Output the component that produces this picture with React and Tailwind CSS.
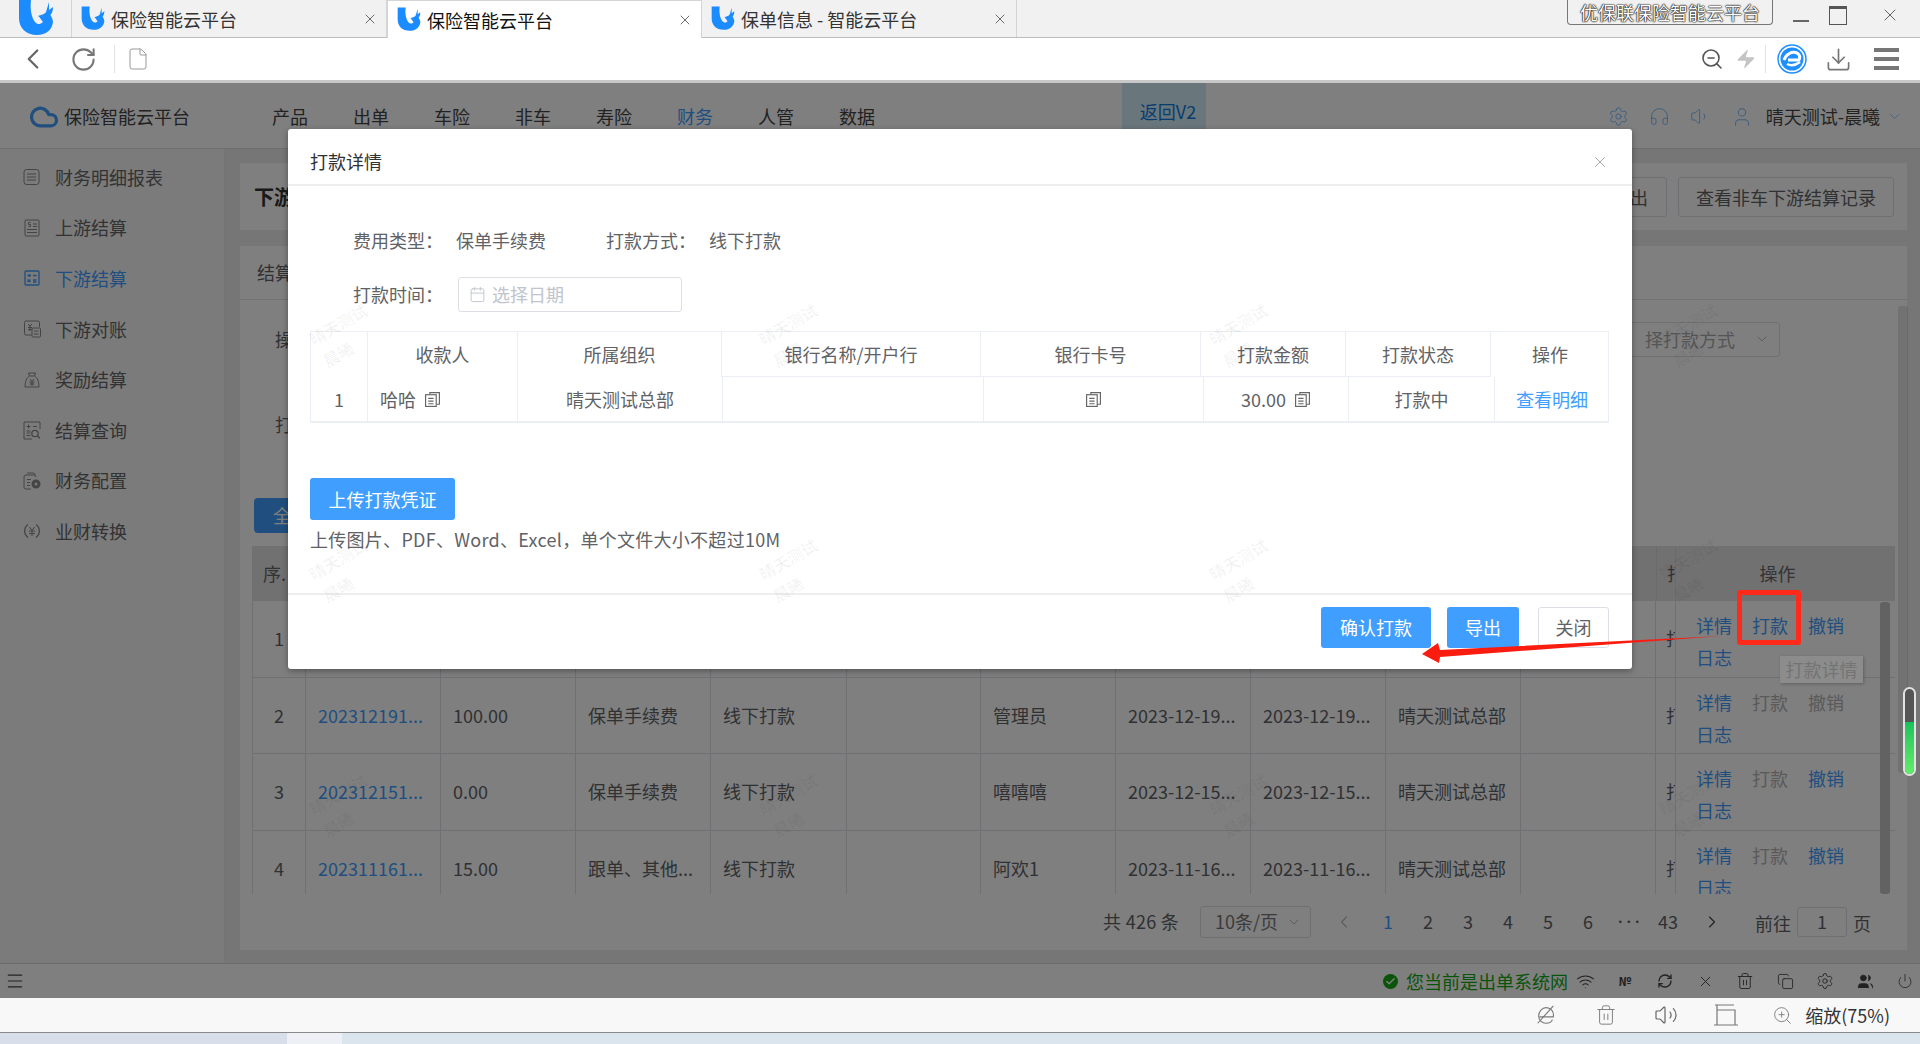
import { Calendar, ChevronDown, ChevronLeft, ChevronRight, Cloud, Download, File, Headphones, Menu, RefreshCw, RotateCw, Settings, Trash2, User, Volume1, Volume2, Wifi, X, Zap, ZoomOut, ZoomIn, Users, Power, Copy, Check } from 'lucide-react';

const tabs = [
  { title: '保险智能云平台' },
  { title: '保险智能云平台', active: true },
  { title: '保单信息 - 智能云平台' },
];

const navItems = ['产品', '出单', '车险', '非车', '寿险', '财务', '人管', '数据'];

const rows = [
  { no: 1, ops: [true, true, true], tall: true },
  { no: 2, id: '202312191...', amount: '100.00', type: '保单手续费', person: '管理员', date: '2023-12-19...', ops: [true, false, false] },
  { no: 3, id: '202312151...', amount: '0.00', type: '保单手续费', person: '嘻嘻嘻', date: '2023-12-15...', ops: [true, false, true] },
  { no: 4, id: '202311161...', amount: '15.00', type: '跟单、其他...', person: '阿欢1', date: '2023-11-16...', ops: [true, false, true] },
];

function BrandMark({ className }) {
  return (
    <svg viewBox="0 0 36 36" className={className}>
      <path fill="#1a8cff" d="M1 0H13C12 8 13 18 18 23 20 25 23 24 25 22 23 20 22 17 20 16 23 15 27 14 28 12L31 2 31 10 35 7C35 11 34 13 32.500 15 34 18 35 20 35 22 34 30 28 35 19 35 8 35 1 28 1 18Z" />
    </svg>
  );
}

function EdgeBadge() {
  return (
    <svg viewBox="0 0 30 30" className="w-[30px] h-[30px]">
      <circle cx="15" cy="15" r="14" fill="white" stroke="#1f8fff" strokeWidth="1.500" />
      <circle cx="15" cy="15" r="11.500" fill="#1f8fff" />
      <path d="M7 16C9 10 15 7 20 9 23 11 23 14 22 16H11" fill="none" stroke="white" strokeWidth="3" />
      <path d="M10 20C14 22 19 21 23 18" fill="none" stroke="white" strokeWidth="2.500" />
    </svg>
  );
}

function CopyIcon() {
  return (
    <svg viewBox="0 0 16 16" className="w-[17px] h-[17px] text-[#666]" fill="none" stroke="currentColor" strokeWidth="1.1">
      <path d="M5.5 3V1.5h9v11H12" />
      <rect x="1.5" y="3.5" width="10" height="11" />
      <path d="M4 7h5M4 9.5h5M4 12h5" />
    </svg>
  );
}

function SideIcon({ kind }) {
  const common = { viewBox: '0 0 20 20', className: 'w-[20px] h-[20px]', fill: 'none', stroke: 'currentColor', strokeWidth: 1 };
  if (kind === 0) return <svg {...common}><rect x="2" y="2.5" width="15" height="15" rx="2.5" /><path d="M5 7h9M5 10h9M5 13h9" /></svg>;
  if (kind === 1) return <svg {...common}><rect x="3" y="2" width="14" height="16" rx="1" /><path d="M11 6h4M11 8.5h4M5 11.5h10M5 14.5h10M8.5 4.5H6.5v2h2v2h-2" /></svg>;
  if (kind === 2) return <svg {...common} strokeWidth="1.3"><rect x="3" y="3" width="14" height="14" rx="1" /><path d="M5.5 7.5h3.5M7.2 6v3M11 7.5h3.5M5.5 14l3-2.5M8.5 14l-3-2.5M11 12h3.5M11 14h3.5" /></svg>;
  if (kind === 3) return <svg {...common}><path d="M10 16H4a1.5 1.5 0 0 1-1.500-1.500V3.500A1.500 1.500 0 0 1 4 2h12a1.500 1.500 0 0 1 1.500 1.500V8" /><rect x="10" y="9" width="8.500" height="9" rx="1" /><path d="M6 5l2 2 2-2M8 7v5M6 8.500h4M6 10.500h4M12 12h4.500M12 15h4.500" /></svg>;
  if (kind === 4) return <svg {...common}><path d="M7.500 6 6.500 3h7l-1 3c3 1.500 4.500 6 4.500 11H3c0-5 1.500-9.500 4.500-11zM7.500 6h5M8 9l2 2.500L12 9M7.500 12h5M7.500 14h5M10 11.500V16" /></svg>;
  if (kind === 5) return <svg {...common}><path d="M18 9V2H2v17h8" /><path d="M4.500 6.500h4M6.500 4.500v4M11 6.500h4M4.500 11h4M4.500 13h4M4.500 15.500h4" /><circle cx="13" cy="13.500" r="3.200" strokeWidth="1.300" /><path d="m15.500 16 2.500 2.500" strokeWidth="1.300" /></svg>;
  if (kind === 6) return <svg {...common}><path d="M9 18H4a2 2 0 0 1-2-2V6a2 2 0 0 1 2-2h8a2 2 0 0 1 2 2" /><path d="M5 2h6a2 2 0 0 1 2 2M5 8.500h4M5 11.500h3M5 14.500h3" /><circle cx="14" cy="13" r="3" strokeWidth="3" /></svg>;
  return <svg {...common}><path d="M6 3.500A8 8 0 0 0 6 16.500M14 16.500A8 8 0 0 0 14 3.500" strokeWidth="1.300" /><path d="M7.500 6 10 9.500 12.500 6M7 10h6M7 12.500h6M10 9.500V15" /></svg>;
}

function Watermarks() {
  return (
    <div className="absolute left-[113px] top-[138px] grid grid-cols-[repeat(4,450px)] auto-rows-[235px] pointer-events-none">
      {Array.from({ length: 12 }, (_, i) => (
        <div key={i} className="flex flex-col items-center justify-center gap-[6px] text-[16px] font-medium text-black/[0.06]">
          <span className="-rotate-[30deg]">晴天测试</span>
          <span className="-rotate-[30deg]">晨曦</span>
        </div>
      ))}
    </div>
  );
}

function BrowserTabs() {
  return (
    <div className="relative h-[38px] shrink-0 flex bg-[#f1f1f1] border-b border-[#bdbdbd] text-[18px] leading-[24px] text-[#333]">
      <div className="w-[72px] flex justify-center border-r border-[#d4d4d4]">
        <BrandMark className="w-[36px] h-[36px]" />
      </div>
      {tabs.map((tab, i) => (
        <div key={i} className={tab.active ? 'w-[315px] h-[38px] flex items-center pl-[9px] pr-[8px] bg-white border-t border-x border-[#d4d4d4] text-[#111]' : 'w-[315px] flex items-center pl-[9px] pr-[8px] border-r border-[#d4d4d4]'}>
          <BrandMark className="w-[24px] h-[25px] shrink-0" />
          <span className="ml-[6px] flex-1">{tab.title}</span>
          <X size={16} strokeWidth={1.3} className="text-[#555]" />
        </div>
      ))}
      <div className="flex-1 flex justify-end items-start">
        <div className="mr-[147px] w-[206px] h-[25px] flex items-center justify-center border border-t-0 border-[#777] rounded-b-[4px] text-white [text-shadow:0_0_2px_#000,0_0_1px_#000,0_0_1px_#000]">优保联保险智能云平台</div>
      </div>
      <div className="absolute right-[20px] top-[5px] flex items-center text-[#555]">
        <div className="w-[16px] h-[2px] bg-[#666] mt-[12px]" />
        <div className="ml-[20px] w-[18px] h-[19px] border border-[#555] border-t-[3px]" />
        <X size={20} strokeWidth={1.1} className="ml-[33px]" />
      </div>
    </div>
  );
}

function BrowserToolbar() {
  return (
    <div className="h-[45px] shrink-0 flex items-center bg-white border-b-[3px] border-[#c8c8c8] text-[#666]">
      <ChevronLeft size={34} strokeWidth={1.6} className="ml-[16px]" />
      <RotateCw size={27} strokeWidth={1.8} className="ml-[20px] text-[#777]" />
      <div className="ml-[17px] w-px h-[28px] bg-[#e2e2e2]" />
      <File size={24} strokeWidth={1} className="ml-[11px] text-[#999]" />
      <div className="ml-auto flex items-center">
        <ZoomOut size={24} strokeWidth={1.6} className="text-[#555]" />
        <Zap size={22} fill="#c4c4c4" strokeWidth={0} className="ml-[11px]" />
        <div className="ml-[8px] w-px h-[28px] bg-[#e2e2e2]" />
        <div className="ml-[11px]"><EdgeBadge /></div>
        <Download size={27} strokeWidth={1.5} className="ml-[18px] text-[#777]" />
        <div className="ml-[22px] mr-[21px] w-[25px] flex flex-col gap-[5px]">
          <div className="h-[4px] bg-[#777]" />
          <div className="h-[4px] bg-[#777]" />
          <div className="h-[4px] bg-[#777]" />
        </div>
      </div>
    </div>
  );
}

function AppHeader() {
  return (
    <div className="h-[66px] shrink-0 flex items-center bg-white border-b border-[#dcdcdc] text-[18px] text-[#444] pt-[2px]">
      <Cloud size={30} strokeWidth={2.6} className="ml-[29px] text-[#409eff]" />
      <span className="ml-[5px]">保险智能云平台</span>
      <div className="ml-[82px] flex gap-[45px]">
        {navItems.map((item) => (
          <span key={item} className={item === '财务' ? 'text-[#409eff]' : ''}>{item}</span>
        ))}
      </div>
      <div className="ml-[247px] self-start -mt-[2px] w-[84px] h-[46px] flex items-center justify-center bg-[#d2ecf8] text-[#0f79e0] pt-[10px] pl-[8px]">返回V2</div>
      <div className="ml-auto pr-[17px] flex items-center text-[#409eff]/70">
        <Settings size={21} strokeWidth={1.1} />
        <Headphones size={21} strokeWidth={1.1} className="ml-[20px]" />
        <Volume1 size={21} strokeWidth={1.1} className="ml-[20px]" />
        <User size={22} strokeWidth={1.1} className="ml-[20px]" />
        <span className="ml-[13px] text-[#444]">晴天测试-晨曦</span>
        <ChevronDown size={17} strokeWidth={1} className="ml-[6px]" />
      </div>
    </div>
  );
}

function Sidebar() {
  const items = ['财务明细报表', '上游结算', '下游结算', '下游对账', '奖励结算', '结算查询', '财务配置', '业财转换'];
  return (
    <div className="w-[225px] shrink-0 bg-[#f7f7f7] border-r border-[#e8e8e8] pt-[3px] text-[18px] text-[#666]">
      {items.map((item, i) => (
        <div key={item} className={i === 2 ? 'h-[50.600px] flex items-center pl-[22px] gap-[13px] text-[#409eff]' : 'h-[50.600px] flex items-center pl-[22px] gap-[13px]'}>
          <span className={i === 2 ? '' : 'text-[#888]'}><SideIcon kind={i} /></span>
          <span>{item}</span>
        </div>
      ))}
    </div>
  );
}

const colTemplate = 'grid-cols-[53px_135px_135px_135px_136px_134px_135px_135px_135px_135px_135px_20px_203px]';

function TableRow({ row }) {
  const cell = 'border-r border-[#dfe1e6] pl-[12px] flex items-center overflow-hidden whitespace-nowrap';
  const opColor = (on) => (on ? 'text-[#409eff]' : 'text-[#b4b4b4]');
  return (
    <div className={`grid ${colTemplate} h-[76.500px] border-b border-[#dfe1e6] text-[18px] text-[#606266]`}>
      <div className="border-r border-[#dfe1e6] flex items-center justify-center">{row.no}</div>
      <div className={`${cell} text-[#409eff]`}>{row.id}</div>
      <div className={cell}>{row.amount}</div>
      <div className={cell}>{row.type}</div>
      <div className={cell}>{row.id && '线下打款'}</div>
      <div className={cell} />
      <div className={cell}>{row.person}</div>
      <div className={cell}>{row.date}</div>
      <div className={cell}>{row.date}</div>
      <div className={cell}>{row.id && '晴天测试总部'}</div>
      <div className={cell} />
      <div className="border-r border-[#dfe1e6] pl-[10px] flex items-center overflow-hidden">
        <span className="w-[9px] overflow-hidden">打</span>
      </div>
      <div className="pl-[20px] pt-[8px] leading-[32px]">
        <div className="flex gap-[20px]">
          <span className={opColor(row.ops[0])}>详情</span>
          <span className={opColor(row.ops[1])}>打款</span>
          <span className={opColor(row.ops[2])}>撤销</span>
        </div>
        <div className="text-[#409eff]">日志</div>
      </div>
    </div>
  );
}

function ResultTable() {
  return (
    <div className="mx-[12px] mt-[13px] h-[348px] overflow-hidden relative border-l border-[#dfe1e6]">
      <div className={`grid ${colTemplate} h-[55px] bg-[#e2e2e4] text-[18px] text-[#666]`}>
        <div className="flex items-center pl-[10px]">序.</div>
        <div className="col-span-10" />
        <div className="border-x border-[#d6d6da] pl-[10px] flex items-center overflow-hidden">
          <span className="w-[9px] overflow-hidden">打</span>
        </div>
        <div className="flex items-center justify-center">操作</div>
      </div>
      {rows.map((row) => <TableRow key={row.no} row={row} />)}
      <div className="absolute left-[1627px] top-[56px] w-[10px] bottom-0 rounded-[3px] bg-[#c4c4c4]" />
    </div>
  );
}

function Pager() {
  return (
    <div className="h-[55px] flex items-center text-[18px] text-[#606266]">
      <span className="ml-[863px] w-[78px] whitespace-nowrap tracking-[0.3px]">共 426 条</span>
      <div className="ml-[19px] w-[111px] h-[32px] border border-[#dcdfe6] rounded-[3px] flex items-center justify-between pl-[14px] pr-[8px] text-[#777]">
        <span>10条/页</span>
        <ChevronDown size={16} strokeWidth={1.2} className="text-[#aaa]" />
      </div>
      <div className="ml-[13px] w-[40px] flex justify-center text-[#bbb]"><ChevronLeft size={20} strokeWidth={1.4} /></div>
      <div className="ml-[4px] flex">
        {['1', '2', '3', '4', '5', '6', '•••', '43'].map((n) => (
          <span key={n} className={n === '1' ? 'w-[40px] text-center text-[#409eff]' : n === '•••' ? 'w-[40px] text-center text-[10px] leading-[27px] font-bold tracking-[-1.500px]' : 'w-[40px] text-center'}>{n}</span>
        ))}
      </div>
      <div className="ml-[4px] w-[40px] flex justify-center text-[#444]"><ChevronRight size={20} strokeWidth={1.4} /></div>
      <span className="ml-[23px] pt-[4px]">前往</span>
      <div className="ml-[6px] w-[50px] h-[30px] border border-[#dcdfe6] rounded-[3px] flex items-center justify-center">1</div>
      <span className="ml-[6px] pt-[4px]">页</span>
    </div>
  );
}

function MainArea() {
  return (
    <div className="flex-1 min-w-0 bg-[#ececec] pl-[15px] pr-[13px] pt-[14px] pb-[13px] flex flex-col gap-[16px]">
      <div className="h-[67px] shrink-0 bg-white flex items-center px-[14px] text-[18px] text-[#606266]">
        <span className="text-[20px] font-bold text-[#333]">下游</span>
        <div className="ml-auto h-[40px] px-[18px] pt-[2px] flex items-center border border-[#dcdfe6] rounded-[3px]">导出</div>
        <div className="ml-[11px] h-[40px] px-[17px] pt-[2px] flex items-center border border-[#dcdfe6] rounded-[3px] -mr-px">查看非车下游结算记录</div>
      </div>
      <div className="flex-1 min-h-0 bg-white text-[18px] text-[#606266]">
        <div className="h-[54px] flex items-center pl-[17px] border-b border-[#e4e7ed]">结算</div>
        <div className="h-[198px] pl-[35px] pt-[25px] relative">
          <div className="flex items-center justify-between h-[28px]">
            <span>操</span>
            <div className="mr-[127px] w-[280px] h-[35px] pr-[9px] border border-[#dcdfe6] rounded-[3px] flex items-center justify-end text-[#aaa]">
              <span className="flex-1 text-right pr-[19px]">择打款方式</span>
              <ChevronDown size={16} strokeWidth={1.2} />
            </div>
          </div>
          <div className="mt-[57px] h-[28px] flex items-center">打</div>
        </div>
        <div className="ml-[14px] w-[80px] h-[35px] flex items-center pl-[19px] bg-[#409eff] rounded-[4px] text-white">全</div>
        <ResultTable />
        <Pager />
      </div>
    </div>
  );
}

function StatusBar() {
  const icons = [
    <Wifi size={19} strokeWidth={1.3} />,
    <span className="text-[12px] font-semibold">№</span>,
    <RefreshCw size={16} strokeWidth={2} />,
    <X size={17} strokeWidth={1.3} />,
    <Trash2 size={18} strokeWidth={1.2} />,
    <Copy size={17} strokeWidth={1.2} />,
    <Settings size={18} strokeWidth={1.2} />,
    <Users size={17} strokeWidth={1.2} fill="currentColor" />,
  ];
  return (
    <div className="h-[35px] shrink-0 flex items-center bg-white border-t border-[#d4d4d4] text-[#444]">
      <Menu size={20} strokeWidth={1.4} className="ml-[5px]" />
      <div className="ml-auto flex items-center">
        <div className="w-[15px] h-[15px] rounded-full bg-[#12a812] flex items-center justify-center text-white mr-[8px]"><Check size={11} strokeWidth={3} /></div>
        <span className="text-[18px] text-[#12a812] mr-[-3px]">您当前是出单系统网</span>
        {icons.map((icon, i) => (
          <div key={i} className="w-[40px] flex justify-center">{icon}</div>
        ))}
        <div className="w-[35px] pl-[5px] flex justify-center"><Power size={16} strokeWidth={1.2} /></div>
      </div>
    </div>
  );
}

function PayModal() {
  const headCols = 'grid-cols-[57px_150px_204px_259px_220px_145px_145px_118px]';
  const bodyCols = 'grid-cols-[57px_150px_205px_261px_220px_145px_146px_114px]';
  const line = 'border-r border-[#ebeef5] flex items-center justify-center';
  return (
    <div className="absolute left-[288px] top-[46px] w-[1344px] h-[540px] bg-white rounded-[3px] flex flex-col text-[18px] text-[#606266] shadow-[0_2px_6px_rgba(0,0,0,0.35)]">
      <div className="h-[57px] shrink-0 flex items-center justify-between pl-[22px] pr-[23px] pt-[10px] border-b-2 border-[#eeeeee] text-[#303133]">
        <span>打款详情</span>
        <X size={18} strokeWidth={1} className="text-[#888]" />
      </div>
      <div className="flex-1 min-h-0 pl-[22px] pr-[23px]">
        <div className="mt-[40px] h-[28px] flex items-center pl-[43px]">
          <span className="w-[103px]">费用类型：</span>
          <span className="w-[150px]">保单手续费</span>
          <span className="w-[103px]">打款方式：</span>
          <span>线下打款</span>
        </div>
        <div className="mt-[23px] h-[35px] flex items-center pl-[43px]">
          <span className="w-[105px]">打款时间：</span>
          <div className="w-[224px] h-[35px] border border-[#dcdfe6] rounded-[3px] flex items-center pl-[10px] gap-[6px] text-[#c0c4cc]">
            <Calendar size={17} strokeWidth={1.3} />
            <span>选择日期</span>
          </div>
        </div>
        <div className="mt-[19px] border-t border-l border-r border-[#ebeef5]">
          <div className={`grid ${headCols} h-[45px]`}>
            <div className={line} />
            <div className={line}>收款人</div>
            <div className={line}>所属组织</div>
            <div className={`${line} border-b`}>银行名称/开户行</div>
            <div className={`${line} border-b`}>银行卡号</div>
            <div className={`${line} border-b`}>打款金额</div>
            <div className={`${line} border-b`}>打款状态</div>
            <div className="flex items-center justify-center">操作</div>
          </div>
          <div className={`grid ${bodyCols} h-[46px] border-b-2 border-[#ebeef5]`}>
            <div className={line}>1</div>
            <div className={`${line} justify-start pl-[12px] gap-[8px]`}>哈哈 <CopyIcon /></div>
            <div className={line}>晴天测试总部</div>
            <div className={line} />
            <div className={line}><CopyIcon /></div>
            <div className={`${line} gap-[8px]`}>30.00 <CopyIcon /></div>
            <div className={line}>打款中</div>
            <div className="flex items-center justify-center text-[#409eff]">查看明细</div>
          </div>
        </div>
        <button className="mt-[55px] w-[145px] h-[42px] bg-[#409eff] rounded-[3px] text-white flex items-center justify-center">上传打款凭证</button>
        <div className="mt-[6px] leading-[26px] tracking-[0.28px]">上传图片、PDF、Word、Excel，单个文件大小不超过10M</div>
      </div>
      <div className="h-[76px] shrink-0 border-t-2 border-[#eeeeee] flex items-start justify-end pt-[12px] pr-[23px]">
        <button className="w-[110px] h-[41px] bg-[#409eff] rounded-[3px] text-white flex items-center justify-center">确认打款</button>
        <button className="ml-[16px] w-[72px] h-[41px] bg-[#409eff] rounded-[3px] text-white flex items-center justify-center">导出</button>
        <button className="ml-[19px] w-[71px] h-[41px] border border-[#dcdfe6] rounded-[3px] flex items-center justify-center">关闭</button>
      </div>
    </div>
  );
}

function Annotations() {
  return (
    <>
      <div className="absolute left-[1737px] top-[507px] w-[64px] h-[55px] border-[5px] border-[#ff2a1a] rounded-[3px]" />
      <svg className="absolute left-0 top-0 w-[1920px] h-[915px] pointer-events-none" viewBox="0 83 1920 915">
        <path fill="#fb1c10" d="M1722 636 1440 650 1438 643 1422 654 1439 663 1440 657z" />
      </svg>
      <div className="absolute left-[1780px] top-[573px] w-[83px] h-[27px] bg-[#8c8c8c] shadow-[1px_1px_3px_rgba(0,0,0,0.25)] flex items-center justify-center text-[18px] text-[#747474]">打款详情</div>
      <div className="absolute left-[1903px] top-[604px] w-[13px] h-[89px] rounded-full border-2 border-[#e2e2e2] bg-[#555] overflow-hidden flex flex-col justify-end">
        <div className="h-[52px] bg-gradient-to-b from-[#14c25c] to-[#62ee6a]" />
      </div>
    </>
  );
}

export default function App() {
  return (
    <div className="relative w-[1920px] h-[1044px] overflow-hidden flex flex-col font-['Noto_Sans_CJK_SC','Liberation_Sans',sans-serif]">
      <BrowserTabs />
      <BrowserToolbar />
      <div className="relative h-[915px] shrink-0 flex flex-col">
        <AppHeader />
        <div className="flex-1 min-h-0 flex">
          <Sidebar />
          <MainArea />
        </div>
        <StatusBar />
        <div className="absolute left-[1898px] top-[223px] w-[10px] h-[467px] bg-black/10 rounded-[3px]" />
        <div className="absolute inset-0 bg-black/50" />
        <PayModal />
        <Watermarks />
        <Annotations />
      </div>
      <div className="h-[35px] shrink-0 flex items-center justify-end bg-[#f8f8f8] border-b border-[#8a8a8a] text-[18px] text-[#333] pr-[30px]">
        <div className="w-[60px] flex justify-center text-[#777]">
          <svg viewBox="0 0 24 24" className="w-[22px] h-[22px]" fill="none" stroke="currentColor" strokeWidth="1.200">
            <path d="M5 14h15C21 8 17 4 12 4 8 4 4 8 4 13c0 5 4 8 8 8 3 0 6-1 7-4" />
            <path d="M20 2 3 21" />
          </svg>
        </div>
        <div className="w-[60px] flex justify-center text-[#777]"><Trash2 size={22} strokeWidth={1} /></div>
        <div className="w-[60px] flex justify-center text-[#666]"><Volume2 size={24} strokeWidth={1.2} /></div>
        <div className="w-[60px] flex justify-center text-[#777]">
          <svg viewBox="0 0 24 22" className="w-[24px] h-[22px]" fill="none" stroke="currentColor" strokeWidth="1.200">
            <path d="M1 1h19M3 1v5M3 6h18v15M3 6v15M0 21h24" />
          </svg>
        </div>
        <div className="ml-[6px] w-[40px] flex justify-center text-[#777]"><ZoomIn size={21} strokeWidth={1} /></div>
        <span className="ml-[3px]">缩放(75%)</span>
      </div>
      <div className="flex-1 flex">
        <div className="w-[287px] bg-[#d8dfea]" />
        <div className="w-[55px] bg-[#edf1f6]" />
        <div className="flex-1 bg-[#dbe5ee]" />
      </div>
    </div>
  );
}
